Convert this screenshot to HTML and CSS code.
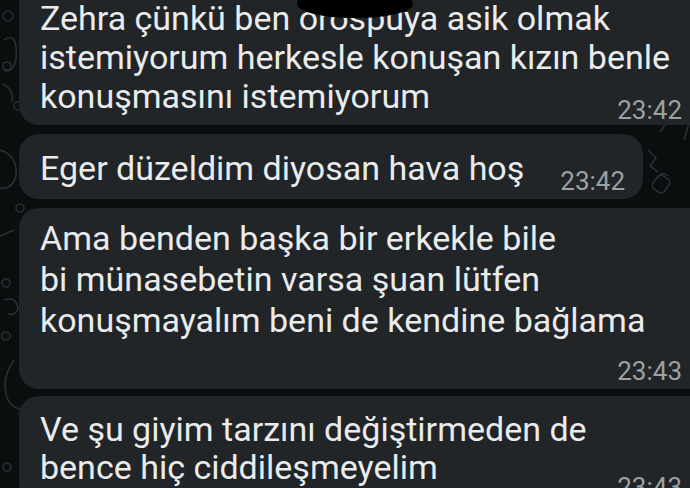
FILE: index.html
```html
<!DOCTYPE html>
<html lang="tr">
<head>
  <meta charset="UTF-8" />
  <meta name="viewport" content="width=device-width, initial-scale=1.0" />
  <title>Sohbet</title>
  <link rel="stylesheet" href="styles.css">
</head>
<body>
  <div class="chat">
    <!-- faint wallpaper doodles -->
    <svg class="doodles" width="690" height="488" viewBox="0 0 690 488" fill="none" stroke="#2a2f31" stroke-width="1.6">
      <circle cx="8" cy="16" r="5" />
      <path d="M4 40 q14 -10 12 20 q-4 14 -12 10" />
      <circle cx="7" cy="66" r="4" />
      <path d="M2 84 q12 4 10 18" />
      <circle cx="18" cy="106" r="4" />
      <path d="M0 150 q18 6 16 26 q-4 14 -16 12" />
      <circle cx="20" cy="208" r="4" />
      <path d="M0 236 l14 -6" />
      <circle cx="6" cy="283" r="4" />
      <path d="M4 300 q12 -4 14 8 q-2 8 -10 6" />
      <circle cx="6" cy="336" r="4" />
      <path d="M14 360 q-14 20 -6 40 q6 10 18 10" />
      <circle cx="7" cy="467" r="4" />
      <path d="M648 150 l8 8 l-6 8 l8 6" />
      <rect x="654" y="176" width="14" height="16" rx="4" transform="rotate(35 661 184)" />
      <path d="M658 178 q4 -8 10 -2" />
      <path d="M684 140 l6 -20" />
      <path d="M660 132 l10 -14" />
    </svg>

    <div class="msg msg-wide msg-first">
      <p class="text">Zehra çünkü ben <span class="redacted">orospuya</span> asik olmak<br>istemiyorum herkesle konuşan kızın benle<br>konuşmasını istemiyorum</p>
      <span class="time time-below">23:42</span>
    </div>

    <div class="msg msg-inline">
      <p class="text">Eger düzeldim diyosan hava hoş</p>
      <span class="time">23:42</span>
    </div>

    <div class="msg msg-wide msg-third">
      <p class="text">Ama benden başka bir erkekle bile<br>bi münasebetin varsa şuan lütfen<br>konuşmayalım beni de kendine bağlama</p>
      <span class="time time-row">23:43</span>
    </div>

    <div class="msg msg-wide msg-last">
      <p class="text">Ve şu giyim tarzını değiştirmeden de<br>bence hiç ciddileşmeyelim</p>
      <span class="time time-below">23:43</span>
    </div>
  </div>
</body>
</html>
```

FILE: styles.css
```css
body {
  margin: 0;
  background: #0b0e0f;
  font-family: Roboto, "Noto Sans", sans-serif;
  color: #e9ebec;
  overflow: hidden;
}
.chat {
  position: relative;
  height: 488px;
  overflow: hidden;
  display: flex;
  flex-direction: column;
  align-items: flex-start;
  gap: 9px;
  padding-left: 19px;
}
.doodles {
  position: absolute;
  left: 0;
  top: 0;
}
.msg {
  position: relative;
  background: #212528;
  border-radius: 20px;
  box-sizing: border-box;
  padding: 0 8px 0 21px;
}
.msg-wide {
  width: 690px;
}
.text {
  margin: 0;
  font-size: 34px;
  line-height: 39px;
  white-space: nowrap;
}
.time {
  display: block;
  font-size: 26px;
  line-height: 30px;
  color: #9ca1a4;
  text-align: right;
  padding-right: 19px;
}

/* first bubble, its top runs off the screen */
.msg-first {
  margin-top: -20px;
  padding-top: 19px;
  height: 148px;
}
.msg-first .time-below {
  margin-top: -21px;
}

/* short message, time on the same row */
.msg-inline {
  display: flex;
  align-items: flex-end;
  gap: 36px;
  padding: 15px 18px 3px 21px;
}
.msg-inline .text {
  margin-bottom: 8px;
}
.msg-inline .time {
  padding-right: 0;
}

.msg-third {
  padding-top: 10px;
  padding-bottom: 3px;
}
.msg-third .text {
  line-height: 41px;
}
.time-row {
  margin-top: 15px;
}

.msg-last {
  margin-top: -2px;
  padding-top: 14px;
  height: 110px;
}
.msg-last .text {
  line-height: 38px;
}
.msg-last .time-below {
  margin-top: -14px;
}

.redacted {
  position: relative;
}
.redacted::after {
  content: "";
  position: absolute;
  left: -2px;
  width: 116px;
  top: -10px;
  height: 30px;
  background: #000;
  border-radius: 45% 55% 50% 50%;
}
```
